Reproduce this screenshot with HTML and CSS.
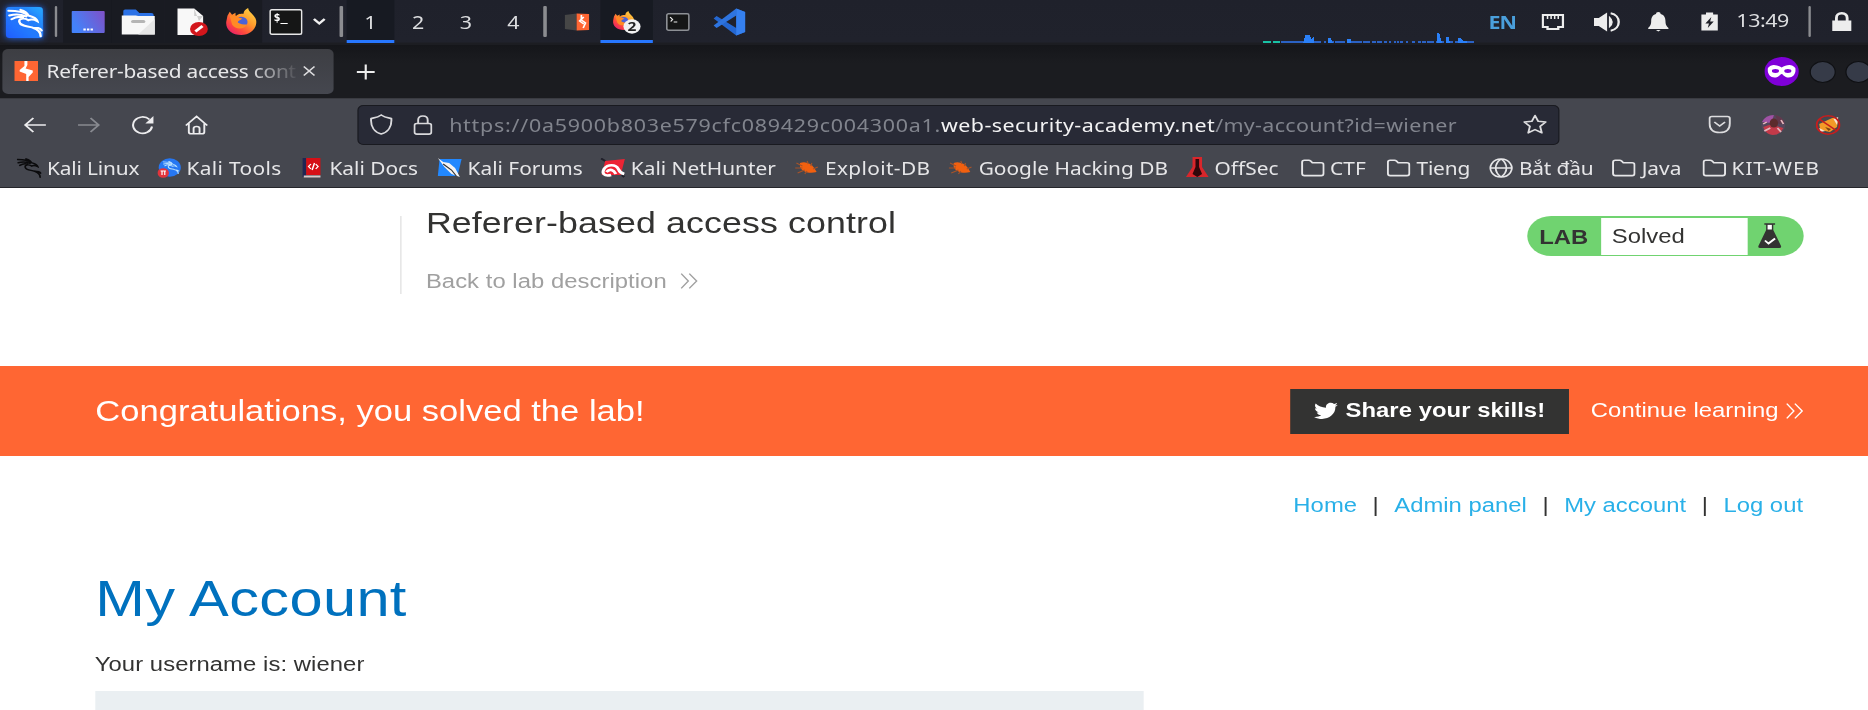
FILE: index.html
```html
<!DOCTYPE html>
<html lang="en">
<head>
<meta charset="utf-8">
<title>Referer-based access control</title>
<link rel="stylesheet" href="styles.css">
</head>
<body>
<svg class="defs" width="0" height="0" aria-hidden="true">
  <defs>
    <linearGradient id="gBlue" x1="0" y1="1" x2="1" y2="0"><stop offset="0" stop-color="#1f5cff"/><stop offset="1" stop-color="#27a7ff"/></linearGradient>
    <linearGradient id="gDesk" x1="0" y1="0.4" x2="1" y2="0"><stop offset="0" stop-color="#4382fa"/><stop offset="1" stop-color="#8050c6"/></linearGradient>
    <linearGradient id="gFox" x1="1" y1="0" x2="0.2" y2="1"><stop offset="0" stop-color="#ffe14d"/><stop offset="0.45" stop-color="#ff9a2b"/><stop offset="0.75" stop-color="#ff4a3d"/><stop offset="1" stop-color="#e61e6b"/></linearGradient>
    <symbol id="dragon" viewBox="0 0 32 30">
      <path d="M1 2 C9 2 15 3 19 7 C22 8 26 9 27 13 C24 11 21 11 19 12 C15 9 10 10 11 14 C12 19 19 18 23 20 C28 22 30 25 30 29 M2 7 C8 5 13 6 17 8 M4 11 C8 8 11 8 14 9 M19 7 C18 4 15 2 12 1 M23 20 C27 20 29 20 31 23" fill="none" stroke="currentColor" stroke-width="2.2" stroke-linecap="round"/>
    </symbol>
    <symbol id="fox" viewBox="0 0 28 28">
      <path d="M2 8 L4 4 L6 7 L9 5 L9 9 C11 6 13 6 16 6 C16 3 18 1 20 0 C20 4 26 7 27 13 C28 21 22 28 14 28 C6 28 0 22 1 14 Z" fill="url(#gFox)"/>
      <circle cx="14" cy="14.500" r="5.500" fill="#4b62d8"/>
      <path d="M4 8 C8 7 10 8 12 10 L15 11 C13 13 11 13 11 15 C13 17 16 17 19 17 C17 22 9 23 6 17 Z" fill="#ff8a26"/>
    </symbol>
    <symbol id="folder" viewBox="0 0 20 18">
      <path d="M1 14.5 V3.2 Q1 1.2 3 1.2 H6.5 Q7.5 1.2 8.2 2 L9.6 3.8 H17 Q19 3.8 19 5.8 V14.5 Q19 16.6 17 16.6 H3 Q1 16.6 1 14.5 Z" fill="none" stroke="#e6e6e8" stroke-width="1.6"/>
    </symbol>
    <symbol id="bug" viewBox="0 0 20 16">
      <path d="M4 3 C8 1 13 3 16 8 L18 12 C12 14 6 12 4 7 Z" fill="#f2600f"/>
      <path d="M1 3 L6 6 M0 8 H6 M2 13 L8 10 M8 14 L10 11 M10 1 L11 4 M14 3 L13 6 M19 7 L15 9" stroke="#a4532a" stroke-width="1" fill="none"/>
    </symbol>
    <symbol id="more" viewBox="0 0 15 16">
      <path d="M0.8 0.6 L6.8 8 L0.8 15.4 M7.6 0.6 L13.8 8 L7.6 15.4" fill="none" stroke="currentColor" stroke-width="1.2"/>
    </symbol>
  </defs>
</svg>

<div class="screen">
  <header class="taskbar">
    <div class="launcher"><svg width="33" height="38" viewBox="0 0 33 38"><rect x="1" y="4" width="31" height="31" rx="3" fill="url(#gBlue)"/><svg x="2" y="5" width="30" height="30" color="#fff"><use href="#dragon"/></svg></svg></div>
    <div><i class="sep"></i></div>
    <div class="dim"><svg width="28" height="22"><rect width="28" height="22" rx="1" fill="url(#gDesk)"/><path d="M10 18.5 h2 m1 0 h2 m1 0 h2" stroke="#fff" stroke-width="2"/></svg></div>
    <div class="dim"><svg width="28" height="26"><path d="M1.500 8 V2 Q1.500 0.500 3 0.500 H12 L15 4 H25 Q27 4 27 6 V10 H1.500 Z" fill="#2c72e6"/><path d="M0 6.500 H12 L14 7 H28 V25.500 H0 Z" fill="#f7f7f7"/><path d="M28 10 V25.500 H14 Z" fill="#e6e6e6"/><rect x="8" y="11" width="12" height="3" rx="1.500" fill="#b5b5b5"/></svg></div>
    <div class="dim"><svg width="27" height="28"><path d="M1 0.500 H15 L22.500 8 V27 H1 Z" fill="#f8f8f8"/><path d="M15 0.500 V8 H22.500 L19 13 Z" fill="#cfcfcf"/><ellipse cx="19" cy="21" rx="7.500" ry="7" fill="#d3161c"/><path d="M16 23.500 L22 18" stroke="#fff" stroke-width="2.500"/></svg></div>
    <div class="dim"><svg width="27" height="27"><use href="#fox"/></svg></div>
    <div><svg width="28" height="26"><rect x="0.700" y="0.700" width="26.600" height="24.600" rx="1.500" fill="#151616" stroke="#e8e8e8" stroke-width="1.400"/><text x="3.500" y="12" class="term">$_</text></svg></div>
    <div><svg width="12" height="8"><path d="M1.500 1 L6 5.500 L10.500 1" fill="none" stroke="#f0f0f0" stroke-width="2.200"/></svg></div>
    <div class="sep-late"><i class="sep"></i></div>
    <div class="ws active">1</div><div class="ws">2</div><div class="ws">3</div><div class="ws">4</div>
    <div><i class="sep"></i></div>
    <div><svg width="21" height="18"><path d="M0 2 L10 0.500 V17.500 L0 16 Z" fill="#464646"/><path d="M10 0.500 L20.500 1 V17 L10 17.500 Z" fill="#ff6633"/><path d="M14 2 V7 L17.500 10 L15.500 15 M16 4 L12.500 8 L16 11" fill="none" stroke="#fff" stroke-width="1.400"/></svg></div>
    <div class="ws active"><svg width="24" height="26"><svg x="0" y="2" width="19" height="19"><use href="#fox"/></svg><ellipse cx="16.500" cy="17.500" rx="7.200" ry="7.200" fill="#f1f1f1"/><text x="12.800" y="22.500" class="count">2</text></svg></div>
    <div><svg width="20" height="18"><rect x="0.700" y="0.700" width="18.600" height="16.600" rx="1.500" fill="#151616" stroke="#8d9095" stroke-width="1.400"/><path d="M3.500 4 L5.500 6.500 L4 8.500 M6.500 9 h3" fill="none" stroke="#e8e8e8" stroke-width="1.200"/></svg></div>
    <div><svg width="28" height="28"><path d="M20 0.500 L27.500 4 V24 L20 27.500 L1 10.500 L3.500 8 L20 20 Z" fill="#2467d1"/><path d="M20 7.500 L3.500 20 L1 17.500 L20 0.500 Z" fill="#2e74df"/><path d="M20 0.500 L27.500 4 V24 L20 27.500 Z" fill="#3580ef"/></svg></div>
    <div></div>
    <div class="graph"><svg width="178" height="13" shape-rendering="crispEdges"><path d="M0.500 12 h6 M8.500 12 h6" stroke="#19c2a5" stroke-width="2"/><path d="M15.500 12 h33 M51 12 h2 M55.500 12 h4 M61 12 h8 M70.500 12 h4 M75 12 h8 M84 12 h6 M92 12 h3 M96 12 h4 M102 12 h2 M106 12 h2 M110 12 h1.500 M113 12 h1 M115 12 h3 M120 12 h2 M125 12 h3 M130 12 h3 M134 12 h3 M138 12 h6 M145 12 h7 M153.500 12 h6 M161 12 h16" stroke="#2b62c4" stroke-width="2"/><path d="M34 13 L35 8 L36 5 H39 L41 9 L43 7 V13 Z M55 13 V8 H57 L59 13 Z M70.500 13 V9 H74 V13 Z M146 13 V3 H148 L150 11 V13 Z M154 13 V7 H156 L157 13 Z M164 13 V8 H166 L168 11 H171 V13 Z" fill="#2a80f8"/></svg></div>
    <div class="lang">EN</div>
    <div><svg width="19" height="16"><path d="M1 1 H18 V13 H14 V15 H5 V13 H1 Z" fill="none" stroke="#ededed" stroke-width="2"/><path d="M5 2 v3 M8 2 v3 M11 2 v3 M14 2 v3" stroke="#ededed" stroke-width="1.300"/></svg></div>
    <div><svg width="22" height="20"><path d="M0 6 H4 L11 0.500 V19.500 L4 14 H0 Z" fill="#ededed"/><path d="M13 5 Q17.500 10 13 15 Z" fill="#ededed" stroke="#ededed"/><path d="M14 1.300 C23 3 23 17 14 18.700" fill="none" stroke="#ededed" stroke-width="2"/></svg></div>
    <div><svg width="18" height="20"><path d="M9 0 Q11 0 11 2 C14 3 15 6 15 9 C15 13 16 14 17.500 16 V17 H0.500 V16 C2 14 3 13 3 9 C3 6 4 3 7 2 Q7 0 9 0 Z M7 18 H11 L9 19.500 Z" fill="#ededed"/></svg></div>
    <div><svg width="14" height="19"><path d="M0 2.500 H4 V0.500 H10 V2.500 H14 V18.500 H0 Z" fill="#ededed"/><path d="M8.500 5 L3.500 11.500 H6.500 L5.500 16 L10.500 9.500 H7.500 Z" fill="#202128"/></svg></div>
    <div class="clock">13:49</div>
    <div><i class="sep"></i></div>
    <div><svg width="18" height="20"><path d="M1 8.500 H17 V19 H1 Z" fill="#ededed"/><path d="M4.500 9 V6 Q4.500 1.300 9 1.300 Q13.500 1.300 13.500 6 V9" fill="none" stroke="#ededed" stroke-width="2.400"/></svg></div>
    <div></div>
  </header>

  <div class="tabs">
    <div class="tab">
      <svg width="20" height="20"><rect width="20" height="20" fill="#ff6633"/><path d="M8.500 0 H11 V4 L9.500 7.500 L15.500 9.500 V11.500 L12 16 V20 H10 V13 L4.500 10.500 V9 L8.500 5 Z" fill="#fff"/></svg>
      <span class="tab-title">Referer-based access cont</span>
      <svg width="11" height="12"><path d="M1 1.500 L10 10.500 M10 1.500 L1 10.500" stroke="#dcdcde" stroke-width="1.400"/></svg>
    </div>
    <svg class="plus" width="16" height="16"><path d="M8 0.500 V15.500 M0.500 8 H15.500" stroke="#ededed" stroke-width="1.800"/></svg>
    <div class="window-buttons">
      <svg width="29" height="29"><ellipse cx="14.500" cy="14.500" rx="14.400" ry="14.400" fill="#7f00d8"/><path d="M3 11 C6 6 11 8 14.500 10.500 C18 8 23 6 26 11 C27 18 23 22 18 20 C16 19 15.500 17 14.500 17 C13.500 17 13 19 11 20 C6 22 2 18 3 11 Z" fill="#fff"/><ellipse cx="9.300" cy="14" rx="3" ry="1.900" fill="#7f00d8"/><ellipse cx="19.700" cy="14" rx="3" ry="1.900" fill="#7f00d8"/></svg>
      <i class="knob"></i><i class="knob"></i>
    </div>
  </div>

  <div class="toolbar">
    <div><svg width="19" height="16"><path d="M18.500 8 H1.500 M8 1 L1.200 8 L8 15" fill="none" stroke="#ececee" stroke-width="1.700"/></svg></div>
    <div><svg width="19" height="16"><path d="M0.500 8 H17.500 M11 1 L17.800 8 L11 15" fill="none" stroke="#888a90" stroke-width="1.700"/></svg></div>
    <div><svg width="20" height="20"><path d="M17.600 11.500 A8 8.200 0 1 1 15.500 4.500" fill="none" stroke="#ececee" stroke-width="1.700"/><path d="M18.800 1 V8.500 H12 Z" fill="#ececee"/></svg></div>
    <div><svg width="20" height="20"><path d="M1 10.500 L10 1.500 L19 10.500 M3.500 8.500 V17 Q3.500 18.800 5.500 18.800 H14.500 Q16.500 18.800 16.500 17 V8.500 M7.500 18.500 V13.500 Q7.500 11.500 10 11.500 Q12.500 11.500 12.500 13.500 V18.500" fill="none" stroke="#ececee" stroke-width="1.600"/></svg></div>
    <div class="urlbar">
      <svg width="20" height="21"><path d="M10 1 C13 3.500 16 3.800 18.500 4.500 C19 12 16 18 10 20 C4 18 1 12 1.500 4.500 C4 3.800 7 3.500 10 1 Z" fill="none" stroke="#d9d9dc" stroke-width="1.600"/></svg>
      <svg class="padlock" width="16" height="20"><rect x="0.900" y="8.500" width="14.200" height="10.600" rx="2" fill="none" stroke="#d9d9dc" stroke-width="1.600"/><path d="M4 8.500 V5 Q4 1 8 1 Q12 1 12 5 V8.500" fill="none" stroke="#d9d9dc" stroke-width="1.600"/></svg>
      <span class="url"><span class="host-id">https://0a5900b803e579cfc089429c004300a1.</span><b>web-security-academy.net</b><span class="path">/my-account?id=wiener</span></span>
      <svg class="star" width="21" height="21"><path d="M10.500 1.500 L13.200 7.300 L19.500 8 L14.800 12.300 L16.200 18.800 L10.500 15.600 L4.800 18.800 L6.200 12.300 L1.500 8 L7.800 7.300 Z" fill="none" stroke="#dcdcde" stroke-width="1.600" stroke-linejoin="round"/></svg>
    </div>
    <div class="extensions">
      <svg width="19" height="19"><path d="M3 1.500 H16 Q18 1.500 18 3.500 V8.500 Q18 17.500 9.500 17.500 Q1 17.500 1 8.500 V3.500 Q1 1.500 3 1.500 Z M5 7 L9.500 11 L14 7" fill="none" stroke="#dcdcde" stroke-width="1.600"/></svg>
      <svg width="21" height="20"><ellipse cx="10.500" cy="10" rx="10" ry="10" fill="#54475c"/><path d="M1 7 Q4 0 11 0 L9 8 Z" fill="#a052a5"/><path d="M12 0 Q19 2 20 8 L15 9 Z" fill="#61384c"/><path d="M2 12 L7 10 L13 11 L19 13 Q16 20 10 20 Q4 19 2 12 Z" fill="#c33a49"/><ellipse cx="11" cy="8" rx="3.500" ry="4.500" fill="#5c2b2c"/><path d="M3 16 L8 13 M14 13 L17 17 M2 9 L5 7 M17 5 L19 9" stroke="#e5b5bb" stroke-width="1.500"/></svg>
      <svg width="21" height="20"><path d="M3 9 L14 3 L19 3 L18 12 L12 17 L4 15 Z" fill="#f39a27"/><path d="M15 4 L19 2 L18 10 Z M3 13 L8 16 L4 17 Z" fill="#f5e4d2"/><path d="M8 12 L13 14 L11 16 Z" fill="#7b4512"/><ellipse cx="10.500" cy="10" rx="9.600" ry="9.200" fill="none" stroke="#c71d1d" stroke-width="1.600"/><path d="M3 4 L18 16" stroke="#c71d1d" stroke-width="1.600"/></svg>
    </div>
  </div>

  <nav class="bookmarks">
    <a class="tight"><svg width="21" height="20" color="#0b0b0d"><use href="#dragon"/></svg>Kali Linux</a>
    <a class="wide"><svg width="20" height="20"><circle cx="10.500" cy="9.500" r="9.300" fill="#2677f2"/><svg x="4" y="3" width="15" height="13" color="#b8e0ff"><use href="#dragon"/></svg><circle cx="5" cy="15" r="4.800" fill="#e1343c"/><path d="M2.800 13 h4.500 M4 13 v4 M6.300 13 v4" stroke="#fff" stroke-width="1"/></svg>Kali Tools</a>
    <a><svg width="19" height="20"><rect x="1" y="0" width="3" height="19" fill="#202653"/><rect x="4" y="0" width="12" height="17" fill="#d50f16"/><path d="M2 18.500 H16" stroke="#d8c9c9" stroke-width="2"/><path d="M8 6 L6 8.500 L8 11 M12 6 L14 8.500 L12 11 M11 5 L9 12" fill="none" stroke="#fff" stroke-width="1.200"/></svg>Kali Docs</a>
    <a><svg width="21" height="20"><path d="M2 1 H20.500 L17 18 H0.500 Z" fill="#2288ff"/><path d="M0.500 0 L5 4 L10 5 L15 10 L19 19 L12 16 L6 9 Z" fill="#f4f4f4"/><path d="M5 6 L12 12 L16 18" stroke="#333" stroke-width="1" fill="none"/></svg>Kali Forums</a>
    <a><svg width="21" height="20"><path d="M4 3 L20.500 1 L17 17 H1 Z" fill="#ed2434"/><path d="M0.500 0.500 L4 3 M18 17 L20 19" stroke="#20202a" stroke-width="2"/><path d="M9 17 C3 19 1 15 3 11 C6 6 13 6 15 11 C16 14 17 15 20 16 M5 14 C8 10 11 12 13 16" fill="none" stroke="#fff" stroke-width="2.600"/></svg>Kali NetHunter</a>
    <a class="wide"><svg width="21" height="16"><use href="#bug"/></svg>Exploit-DB</a>
    <a><svg width="21" height="16"><use href="#bug"/></svg>Google Hacking DB</a>
    <a><svg width="20" height="21"><path d="M6 0 H14 V10 L19.500 20 H0.500 L6 10 Z" fill="#d9262b"/><path d="M8.500 2 H11.500 V10 L14 17 L10 20 L6 17 L8.500 10 Z" fill="#31070a"/></svg>OffSec</a>
    <a><svg width="20" height="18"><use href="#folder"/></svg>CTF</a>
    <a class="tight"><svg width="20" height="18"><use href="#folder"/></svg>Tieng</a>
    <a class="tight"><svg width="20" height="20"><path d="M10 1 A9 9 0 1 1 9.990 1 Z M10 1 C4 6 4 14 10 19 C16 14 16 6 10 1 M1 10 H19" fill="none" stroke="#e6e6e8" stroke-width="1.500"/></svg>Bắt đầu</a>
    <a><svg width="20" height="18"><use href="#folder"/></svg>Java</a>
    <a class="widest"><svg width="20" height="18"><use href="#folder"/></svg>KIT-WEB</a>
  </nav>

  <main class="page">
    <section class="lab-header">
      <div class="lab-title">
        <h2>Referer-based access control</h2>
        <a class="back">Back to lab description <svg width="15" height="16"><use href="#more"/></svg></a>
      </div>
      <div class="pill">
        <span class="pill-lab">LAB</span>
        <span class="pill-state">Solved</span>
        <svg width="21" height="26"><path d="M7.500 1 V7 L1 23 Q0.500 25 2.500 25 H18.500 Q20.500 25 20 23 L13.500 7 V1 Z" fill="#333332"/><path d="M8.700 1.500 H12.300 V6.500 H8.700 Z" fill="#fff"/><path d="M6 1 H15" stroke="#333332" stroke-width="1.500"/><path d="M6.500 17.500 L9.500 20.500 L15 15.500" fill="none" stroke="#fff" stroke-width="1.700"/></svg>
      </div>
    </section>
    <section class="banner">
      <h4>Congratulations, you solved the lab!</h4>
      <a class="share"><svg width="20" height="18" viewBox="0 0 24 20"><path d="M24 2.400 C23 2.800 22.200 3 21.200 3.100 C22.200 2.500 23 1.500 23.300 0.400 C22.300 0.900 21.300 1.300 20.200 1.500 C17 -1.600 11.500 0.700 12 6 C8 5.800 4.200 3.900 1.700 0.900 C0.300 3.200 1 6 3.200 7.400 C2.400 7.400 1.600 7.200 1 6.800 C1 9.100 2.600 11.100 4.900 11.600 C4.200 11.800 3.400 11.800 2.700 11.700 C3.300 13.600 5.100 15 7.300 15.100 C5.200 16.700 2.700 17.400 0 17.100 C10.500 23.500 22 16.300 21.500 4.900 C22.500 4.200 23.300 3.400 24 2.400 Z" fill="#fff"/></svg><span>Share your skills!</span></a>
      <a class="continue"><span>Continue learning</span><svg width="15" height="16"><use href="#more"/></svg></a>
    </section>
    <nav class="links"><a>Home</a><i>|</i><a>Admin panel</a><i>|</i><a>My account</a><i>|</i><a>Log out</a></nav>
    <h1>My Account</h1>
    <p class="user">Your username is: wiener</p>
    <div class="form"></div>
  </main>
</div>
</body>
</html>
```
FILE: styles.css
```css
* { box-sizing: border-box; }
html, body { margin: 0; width: 1868px; height: 710px; overflow: hidden; background: #fff; }
.defs { position: absolute; }
svg { display: block; flex: none; }
h1, h2, h4, p { margin: 0; font-weight: 400; }
i { font-style: normal; }

/* The desktop is laid out 1568 units wide and shown stretched across the window. */
.screen {
  width: 1568px;
  height: 710px;
  overflow: hidden;
  transform: scaleX(1.191327);
  transform-origin: 0 0;
  font-family: "Noto Sans", sans-serif;
  display: flex;
  flex-direction: column;
}

/* panel */
.taskbar {
  height: 45px;
  flex: none;
  display: grid;
  grid-template-columns: 41px 12px 41px 44px 46px 36px 39px 18px 14px 40px 40px 40px 40px 13px 40px 44px 42px 44px 1fr 181px 40px 45px 45px 41px 45px 45px 34px 19px 13px;
  background: linear-gradient(#1f212b, #20222c 42px, #1c1d22 43px);
  color: #dddee0;
}
.taskbar > div { height: 43px; display: flex; align-items: center; justify-content: center; }
.taskbar .dim { background: #191b22; }
.launcher svg { filter: drop-shadow(0 0 3px #2469f0); }
.sep { width: 2.500px; height: 31px; background: #8b8c90; border-radius: 1px; }
.taskbar .sep-late { justify-content: flex-start; padding-left: 8px; }
.ws { font-size: 18px; }
.taskbar .active { background: #171a22; border-bottom: 3px solid #2777ff; padding-top: 3px; }
.term { font: bold 10px "DejaVu Sans Mono", monospace; fill: #fff; }
.count { font: bold 13px "Noto Sans", sans-serif; fill: #222; }
.taskbar .graph { align-items: flex-end; justify-content: flex-start; }
.lang { font: bold 18px "Noto Sans", sans-serif; color: #4a9fdb; letter-spacing: -0.800px; }
.clock { font-size: 18px; letter-spacing: -0.400px; white-space: nowrap; }
.taskbar > .clock { align-items: flex-start; padding-top: 8px; }

/* tabs */
.tabs { height: 53px; flex: none; display: flex; align-items: center; background: linear-gradient(#15161a, #1b1c20 18px); padding-left: 1.500px; }
.tab { width: 278.500px; height: 45px; margin-bottom: 1px; display: flex; align-items: center; gap: 7px; padding-left: 10.500px; border-radius: 5px; background: linear-gradient(#3d3e43, #45474f); }
.tab-title { width: 214px; margin-right: -6px; white-space: nowrap; font-size: 17.500px; letter-spacing: -0.200px; color: #e8e8ea; -webkit-mask-image: linear-gradient(90deg, #000 170px, transparent 213px); mask-image: linear-gradient(90deg, #000 170px, transparent 213px); }
.plus { margin-left: 19px; margin-top: 1px; }
.window-buttons { margin-left: auto; display: flex; align-items: center; gap: 8.500px; margin-right: -3px; }
.knob { width: 22px; height: 22px; border-radius: 50%; background: #363b48; border: 1px solid #0f1013; }

/* toolbar */
.toolbar { height: 52px; flex: none; display: grid; grid-template-columns: 58px 33px 57px 33px 1009px 1fr; background: #45474f; border-top: 1px solid #3a3b41; align-items: center; }
.toolbar > div { display: flex; align-items: center; justify-content: center; }
.toolbar > .urlbar { margin-left: 119px; width: 1009px; height: 40px; border: 1px solid #191a20; border-radius: 5px; background: #282a36; justify-content: flex-start; padding-left: 9px; }
.padlock { margin-left: 17px; }
.url { margin-left: 14px; width: 846px; display: flex; white-space: nowrap; font-size: 18px; color: #81848d; }
.host-id { letter-spacing: 0.620px; }
.url b { font-weight: 400; color: #f3f3f4; letter-spacing: 0.370px; }
.path { letter-spacing: 0.280px; }
.star { margin-left: 55px; }
.toolbar > .extensions { justify-content: flex-start; gap: 25px; padding-left: 244px; }

/* bookmarks */
.bookmarks { height: 38px; flex: none; display: grid; grid-template-columns: 118px 121px 114px 137px 163px 129px 199px 97px 72.500px 86px 103px 75.500px 1fr; padding: 0 0 2px 13.500px; background: #45474f; border-bottom: 1px solid #25262b; align-items: center; }
.bookmarks a { display: flex; align-items: center; gap: 5px; white-space: nowrap; font-size: 17.500px; letter-spacing: 0; color: #e6e6e8; }
.bookmarks .tight { letter-spacing: -0.140px; }
.bookmarks .wide { letter-spacing: 0.300px; }
.bookmarks .widest { letter-spacing: 0.750px; }

/* lab page */
.page { flex: 1; background: #fff; font-family: "Liberation Sans", Arial, sans-serif; font-size: 20px; line-height: 24px; color: #333332; }
.lab-header { height: 178px; display: flex; justify-content: space-between; padding: 28px 54px 0 336px; }
.lab-title { height: 78px; border-left: 1px solid #dedede; padding-left: 20.500px; }
.lab-title h2 { font-size: 30px; line-height: 34px; margin-top: -10px; letter-spacing: 0.100px; }
.back { display: flex; align-items: center; gap: 11px; margin-top: 28.500px; color: #a0a0a0; letter-spacing: 0.040px; }
.pill { width: 232px; height: 40px; border-radius: 20px; background: #70d370; display: flex; align-items: center; padding: 1px 0; overflow: hidden; }
.pill-lab { width: 62px; padding: 2px 0 0 10px; font-weight: 700; }
.pill-state { width: 123px; height: 37px; padding: 6.500px 0 0 9px; margin-right: 8px; background: #fff; }
.banner { height: 90px; display: flex; align-items: center; background: #ff6633; color: #fff; padding: 0 54px 0 80px; }
.banner h4 { font-size: 29px; margin-right: auto; }
.share { width: 234px; height: 45px; display: flex; align-items: center; gap: 6px; padding-left: 20px; background: #333332; font-weight: 700; white-space: nowrap; margin-right: 18px; letter-spacing: 0.050px; }
.share span, .continue span { margin-top: -2px; }
.continue { display: flex; align-items: center; gap: 6px; white-space: nowrap; letter-spacing: 0.050px; }
.links { display: flex; justify-content: flex-end; gap: 13px; padding: 37px 54.500px 0 0; color: #29b0e8; letter-spacing: 0.020px; }
.links i { color: #333332; }
.page h1 { font-size: 50px; line-height: 58px; margin: 53px 0 0 80px; color: #0071be; letter-spacing: 0.300px; }
.user { margin: 24px 0 0 79.500px; letter-spacing: 0.060px; }
.form { margin: 15px 0 0 80px; width: 880px; height: 60px; background: #eaeff2; }
```
